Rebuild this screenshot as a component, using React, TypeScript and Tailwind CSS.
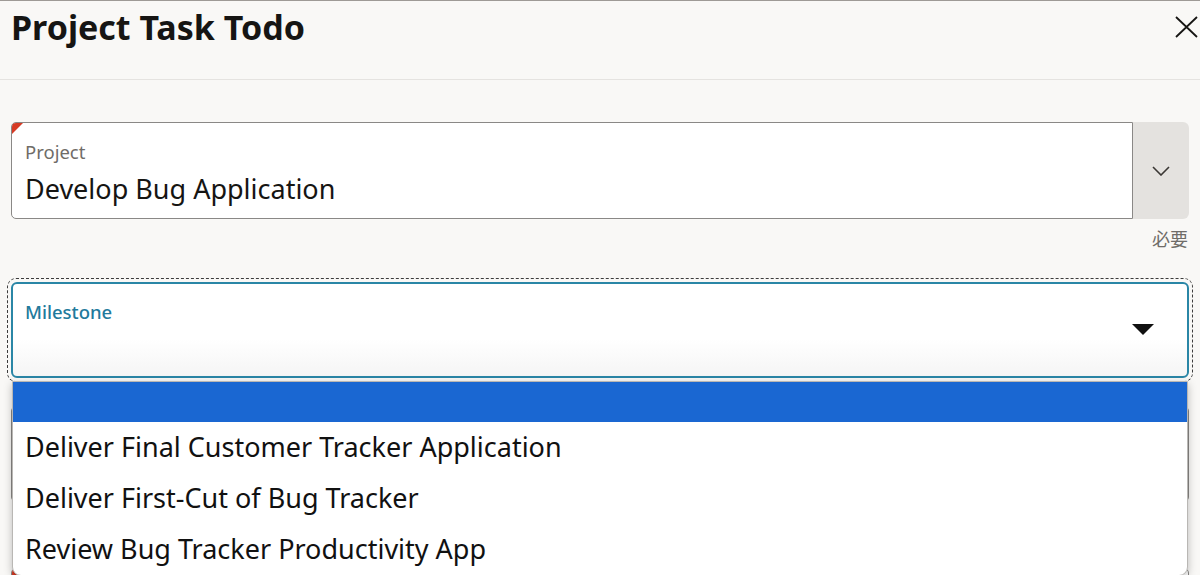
import React from 'react';

const options = [
  '',
  'Deliver Final Customer Tracker Application',
  'Deliver First-Cut of Bug Tracker',
  'Review Bug Tracker Productivity App',
];

const RequiredMark: React.FC = () => (
  <span className="absolute left-0 top-0 w-0 h-0 border-t-[11px] border-r-[11px] border-t-[#d63b25] border-r-transparent rounded-tl-[4px]" />
);

const App: React.FC = () => {
  return (
    <div className="h-[575px] overflow-hidden bg-[#f9f8f6] border-t border-[#9e9a96] font-['Noto_Sans',sans-serif] text-[#161513]">
      {/* header */}
      <div className="h-[79px] border-b border-[#e5e3e0] flex items-start justify-between pl-[11px] pr-[2px]">
        <h1 className="text-[34px] font-bold leading-none mt-[9px]">Project Task Todo</h1>
        <button className="mt-[14px] w-[24px] h-[24px] flex items-center justify-center">
          <svg width="23" height="22" viewBox="0 0 23 22" fill="none" stroke="#161513" strokeWidth="1.8">
            <path d="M1 1 L22 21 M22 1 L1 21" />
          </svg>
        </button>
      </div>

      <div className="px-[11px]">
        {/* Project */}
        <div className="mt-[42px] flex h-[97px]">
          <div className="relative flex-1 bg-white border border-[#8a8886] rounded-l-[5px] pl-[13px] pt-[18px]">
            <RequiredMark />
            <div className="text-[18.5px] leading-[22px] text-[#6f6c68]">Project</div>
            <div className="text-[27px] leading-[34px] mt-[9px]">Develop Bug Application</div>
          </div>
          <div className="w-[56px] bg-[#e4e2df] rounded-r-[6px] flex items-center justify-center">
            <svg width="18" height="10" viewBox="0 0 18 10" fill="none" stroke="#3a3734" strokeWidth="1.6">
              <path d="M1 1 L9 9 L17 1" />
            </svg>
          </div>
        </div>
        <div className="text-right text-[18px] leading-[22px] text-[#6f6c68] mt-[8px] pr-[1px] font-['Noto_Sans_CJK_SC',sans-serif]">必要</div>

        {/* Milestone */}
        <div className="relative mt-[29px] -mx-[4px] border border-dashed border-[#3c3c3c] rounded-[9px] p-[3px]">
          <div className="h-[96px] border-2 border-[#2a86a6] rounded-[6px] bg-gradient-to-b from-white from-60% to-[#f5f5f5] flex items-start justify-between pl-[12px] pr-[33px] pt-[17px]">
            <div className="text-[18.5px] leading-[22px] font-medium text-[#227a9c]">Milestone</div>
            <svg className="mt-[23px]" width="22" height="11" viewBox="0 0 22 11">
              <path d="M0 0 H22 L11 11 Z" fill="#111" />
            </svg>
          </div>

          {/* dropdown list */}
          <div className="absolute z-10 left-[4px] right-[4px] top-[102px] bg-white border border-[#b9b7b4] rounded-b-[9px] shadow-[0_3px_8px_rgba(0,0,0,0.25)] overflow-hidden">
            {options.map((opt, i) => (
              <div
                key={i}
                className={
                  i === 0
                    ? 'h-[40px] bg-[#1a67d2]'
                    : 'h-[51px] pl-[12px] flex items-center text-[27px] text-[#111]'
                }
              >
                {opt}
              </div>
            ))}
          </div>
        </div>

        {/* fields below, mostly hidden by the list */}
        <div className="relative mt-[24px] h-[96px] bg-white border border-[#8a8886] rounded-[5px]">
          <RequiredMark />
        </div>
        <div className="relative mt-[66px] h-[96px] bg-white border border-[#8a8886] rounded-[5px]">
          <RequiredMark />
        </div>
      </div>
    </div>
  );
};

export default App;
